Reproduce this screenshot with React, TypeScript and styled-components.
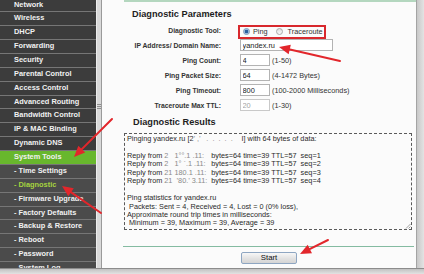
import React from 'react';
import styled, { createGlobalStyle } from 'styled-components';

type RowKind = 'main' | 'active' | 'sub' | 'current';

const MENU: { label: string; kind: RowKind }[] = [
  { label: 'Network', kind: 'main' },
  { label: 'Wireless', kind: 'main' },
  { label: 'DHCP', kind: 'main' },
  { label: 'Forwarding', kind: 'main' },
  { label: 'Security', kind: 'main' },
  { label: 'Parental Control', kind: 'main' },
  { label: 'Access Control', kind: 'main' },
  { label: 'Advanced Routing', kind: 'main' },
  { label: 'Bandwidth Control', kind: 'main' },
  { label: 'IP & MAC Binding', kind: 'main' },
  { label: 'Dynamic DNS', kind: 'main' },
  { label: 'System Tools', kind: 'active' },
  { label: '- Time Settings', kind: 'sub' },
  { label: '- Diagnostic', kind: 'current' },
  { label: '- Firmware Upgrade', kind: 'sub' },
  { label: '- Factory Defaults', kind: 'sub' },
  { label: '- Backup & Restore', kind: 'sub' },
  { label: '- Reboot', kind: 'sub' },
  { label: '- Password', kind: 'sub' },
  { label: '- System Log', kind: 'sub' },
];

// redacted ip fragments, as they show through the white blobs
const REPLIES = ['2   1°°.1 .11:  ', '2   1° `.1 .11:  ', '21 180.1 .11:  ', '21  ’80.’ 3.11: '];

const RED = '#e2262b';

// red annotation arrows drawn over the screenshot
const ARROWS = [
  { x1: 112, y1: 119, x2: 74, y2: 157 },
  { x1: 101, y1: 213, x2: 62, y2: 186 },
  { x1: 340, y1: 61, x2: 279, y2: 47 },
  { x1: 328, y1: 240, x2: 300, y2: 254 },
];

const Arrow = ({ x1, y1, x2, y2 }: { x1: number; y1: number; x2: number; y2: number }) => {
  const len = Math.hypot(x2 - x1, y2 - y1);
  const ux = (x2 - x1) / len;
  const uy = (y2 - y1) / len;
  const head = 11;
  const half = 4.8;
  const bx = x2 - ux * head;
  const by = y2 - uy * head;
  const pts = `${x2},${y2} ${bx - uy * half},${by + ux * half} ${bx + uy * half},${by - ux * half}`;
  return (
    <g>
      <line x1={x1} y1={y1} x2={bx + ux * 2} y2={by + uy * 2} stroke={RED} strokeWidth={2} strokeLinecap="round" />
      <polygon points={pts} fill={RED} />
    </g>
  );
};

const App = () => {
  return (
    <>
      <GlobalStyle />
      <Page>
        <Window>
          <Sidebar>
            <MenuList>
              {MENU.map((m) => (
                <MenuRow key={m.label} $kind={m.kind}>
                  {m.label}
                </MenuRow>
              ))}
            </MenuList>
          </Sidebar>
          <ScrollTrack>
            <svg width="4" height="6" viewBox="0 0 4 6">
              <path d="M0 0.5H4M0 2.5H4M0 4.5H4" stroke="#8e8e8e" strokeWidth="1" />
            </svg>
          </ScrollTrack>
          <Divider />

          <Panel>
            <Content>
              <SectionTitle>Diagnostic Parameters</SectionTitle>
              <Form>
                <Label>Diagnostic Tool:</Label>
                <div>
                  <RadioBox>
                    <Radio $checked />
                    <RadioText>Ping</RadioText>
                    <Radio $checked={false} style={{ marginLeft: 8.5 }} />
                    <RadioText style={{ marginLeft: 4.5 }}>Traceroute</RadioText>
                  </RadioBox>
                </div>

                <Label>IP Address/ Domain Name:</Label>
                <Field>
                  <TextBox $w={93} readOnly value="yandex.ru" />
                </Field>

                <Label>Ping Count:</Label>
                <Field>
                  <TextBox $w={30} readOnly value="4" />
                  <Hint>(1-50)</Hint>
                </Field>

                <Label>Ping Packet Size:</Label>
                <Field>
                  <TextBox $w={30} readOnly value="64" />
                  <Hint>(4-1472 Bytes)</Hint>
                </Field>

                <Label>Ping Timeout:</Label>
                <Field>
                  <TextBox $w={30} readOnly value="800" />
                  <Hint>(100-2000 Milliseconds)</Hint>
                </Field>

                <Label>Traceroute Max TTL:</Label>
                <Field>
                  <TextBox $w={30} $disabled readOnly value="20" />
                  <Hint>(1-30)</Hint>
                </Field>
              </Form>

              <SectionTitle $gap>Diagnostic Results</SectionTitle>
              <Results>
                <Line>
                  Pinging yandex.ru [2<Blot $w={48}>’ ,’   .  .  .  .  .</Blot>I] with 64 bytes of data:
                </Line>
                <Line> </Line>
                {REPLIES.map((ip, i) => (
                  <Line key={i}>
                    Reply from <Blot $w={47}>{ip}</Blot>bytes=64 time=39 TTL=57  seq={i + 1}
                  </Line>
                ))}
                <Line> </Line>
                <Line>Ping statistics for yandex.ru</Line>
                <Line> Packets: Sent = 4, Received = 4, Lost = 0 (0% loss),</Line>
                <Line>Approximate round trip times in milliseconds:</Line>
                <Line> Minimum = 39, Maximum = 39, Average = 39</Line>
                <Grip width="6" height="6" viewBox="0 0 6 6">
                  <path d="M5.5 1L1 5.5M5.5 3.5L3.5 5.5" stroke="#8a8a8a" strokeWidth="0.8" />
                </Grip>
              </Results>

              <Rule />
              <ButtonRow>
                <StartButton type="button">Start</StartButton>
              </ButtonRow>
            </Content>
          </Panel>
          <Shadow />
        </Window>
        <BottomEdge />

        <Overlay width="424" height="274" viewBox="0 0 424 274">
          {ARROWS.map((a, i) => (
            <Arrow key={i} {...a} />
          ))}
        </Overlay>
      </Page>
    </>
  );
};

// ---------------------------------------------------------------------------
// Styled components
// ---------------------------------------------------------------------------

const GlobalStyle = createGlobalStyle`
  html, body {
    margin: 0;
    padding: 0;
    background: #ffffff;
  }
  body {
    font-family: 'Liberation Sans', Arial, sans-serif;
  }
  #root {
    width: 424px;
    height: 274px;
    overflow: hidden;
  }
`;

const Page = styled.div`
  position: relative;
  width: 424px;
  height: 274px;
  display: flex;
  flex-direction: column;
  overflow: hidden;
  font-family: 'Liberation Sans', Arial, sans-serif;
`;

const Window = styled.div`
  display: flex;
  height: 268px;
  flex-shrink: 0;
`;

const Sidebar = styled.nav`
  width: 96px;
  flex-shrink: 0;
  overflow: hidden;
  background: #3c3c3c;
`;

const MenuList = styled.ul`
  list-style: none;
  margin: -1.4px 0 0;
  padding: 0;
`;

const rowBg: Record<RowKind, string> = {
  main: '#3c3c3c',
  active: '#68b72d',
  sub: '#4b4b4b',
  current: '#4b4b4b',
};

const MenuRow = styled.li<{ $kind: RowKind }>`
  height: 12.87px;
  line-height: 12.87px;
  padding-left: 14px;
  border-bottom: 1px solid #767676;
  background: ${({ $kind }) => rowBg[$kind]};
  color: ${({ $kind }) => ($kind === 'current' ? '#a6d33f' : '#f1f1f1')};
  font-size: 7.4px;
  font-weight: bold;
  white-space: nowrap;
`;

const ScrollTrack = styled.div`
  width: 5px;
  flex-shrink: 0;
  display: flex;
  justify-content: center;
  padding-top: 104px;
  box-sizing: border-box;
  background: #d9d9d9;
  border-left: 1px solid #ededed;
`;

const Divider = styled.div`
  width: 1px;
  flex-shrink: 0;
  background: #9a9a9a;
`;

const Panel = styled.main`
  width: 314px;
  flex-shrink: 0;
  padding-left: 22px;
  box-sizing: border-box;
  background: #fbfbfb;
  overflow: hidden;
`;

const Shadow = styled.div`
  flex: 1;
  background: linear-gradient(to right, #a4a4a4 0 1px, #c8c8c8 1px, #e3e3e3);
`;

const BottomEdge = styled.div`
  flex: 1;
  border-top: 1px solid #8c8c8c;
  background: linear-gradient(#c2c2c2, #e2e2e2);
`;

const Content = styled.div`
  display: flex;
  flex-direction: column;
  border-top: 2px solid #b4d7bf;
  height: 100%;
  box-sizing: border-box;
`;

const SectionTitle = styled.h2<{ $gap?: boolean }>`
  margin: ${({ $gap }) => ($gap ? '4px 0 5.8px 9px' : '6.5px 0 3px 8px')};
  font-size: 9.2px;
  line-height: 11px;
  font-weight: bold;
  color: #1e1e1e;
`;

const Form = styled.div`
  display: grid;
  grid-template-columns: 97px auto;
  column-gap: 19px;
  grid-auto-rows: 15px;
  align-items: center;
`;

const Label = styled.div`
  text-align: right;
  font-size: 6.8px;
  font-weight: bold;
  color: #333;
  white-space: nowrap;
`;

const Field = styled.div`
  display: flex;
  align-items: center;
  gap: 2px;
`;

const TextBox = styled.input<{ $w: number; $disabled?: boolean }>`
  width: ${({ $w }) => $w}px;
  height: 12px;
  box-sizing: border-box;
  margin: 0;
  padding: 0 1.5px;
  border: 1px solid ${({ $disabled }) => ($disabled ? '#c9c9c9' : '#b3b3b3')};
  border-radius: 0;
  background: #ffffff;
  color: ${({ $disabled }) => ($disabled ? '#a3a3a3' : '#222')};
  font-family: 'Liberation Sans', Arial, sans-serif;
  font-size: 7.4px;
  outline: none;
`;

const Hint = styled.span`
  font-size: 7.3px;
  color: #333;
  white-space: nowrap;
`;

const RadioBox = styled.div`
  display: inline-flex;
  align-items: center;
  height: 14px;
  box-sizing: border-box;
  margin-left: -2px;
  padding: 0 1px 0 3px;
  border: 2px solid #d8282d;
`;

const Radio = styled.span<{ $checked: boolean }>`
  width: 7px;
  height: 7px;
  box-sizing: border-box;
  border-radius: 50%;
  border: 1px solid ${({ $checked }) => ($checked ? '#7c97b6' : '#a9a9a9')};
  background: ${({ $checked }) =>
    $checked
      ? 'radial-gradient(circle, #2b5f9e 0 1.4px, #8fb9e2 2px, #e6f0fa 3px)'
      : 'linear-gradient(#dedede, #fafafa)'};
`;

const RadioText = styled.span`
  margin-left: 3px;
  font-size: 7.3px;
  color: #333;
  white-space: nowrap;
`;

const Results = styled.div`
  position: relative;
  height: 97px;
  margin-right: 4px;
  box-sizing: border-box;
  padding: 0.5px 0 0 2px;
  border: 1px dashed #5a5a5a;
  overflow: hidden;
  font-size: 7.3px;
  line-height: 8.47px;
  color: #2a2a2a;
`;

const Line = styled.div`
  height: 8.47px;
  white-space: pre;
`;

const Blot = styled.span<{ $w: number }>`
  display: inline-block;
  width: ${({ $w }) => $w}px;
  vertical-align: top;
  white-space: pre;
  color: #8a8a8a;
`;

const Grip = styled.svg`
  position: absolute;
  right: 0;
  bottom: 0;
`;

const Rule = styled.div`
  height: 1px;
  margin: 16px 2px 0 -1px;
  background: #84bba1;
`;

const ButtonRow = styled.div`
  display: flex;
  padding-left: 117px;
  margin-top: 5px;
`;

const StartButton = styled.button`
  width: 56px;
  height: 12px;
  margin: 0;
  padding: 0;
  box-sizing: border-box;
  border: 1px solid #8ea6c2;
  border-radius: 2px;
  background: linear-gradient(#f7f7f7, #e2e2e2 55%, #d4d4d4);
  color: #111;
  font-family: 'Liberation Sans', Arial, sans-serif;
  font-size: 7.8px;
  line-height: 10px;
`;

const Overlay = styled.svg`
  position: absolute;
  left: 0;
  top: 0;
  pointer-events: none;
`;

export default App;
